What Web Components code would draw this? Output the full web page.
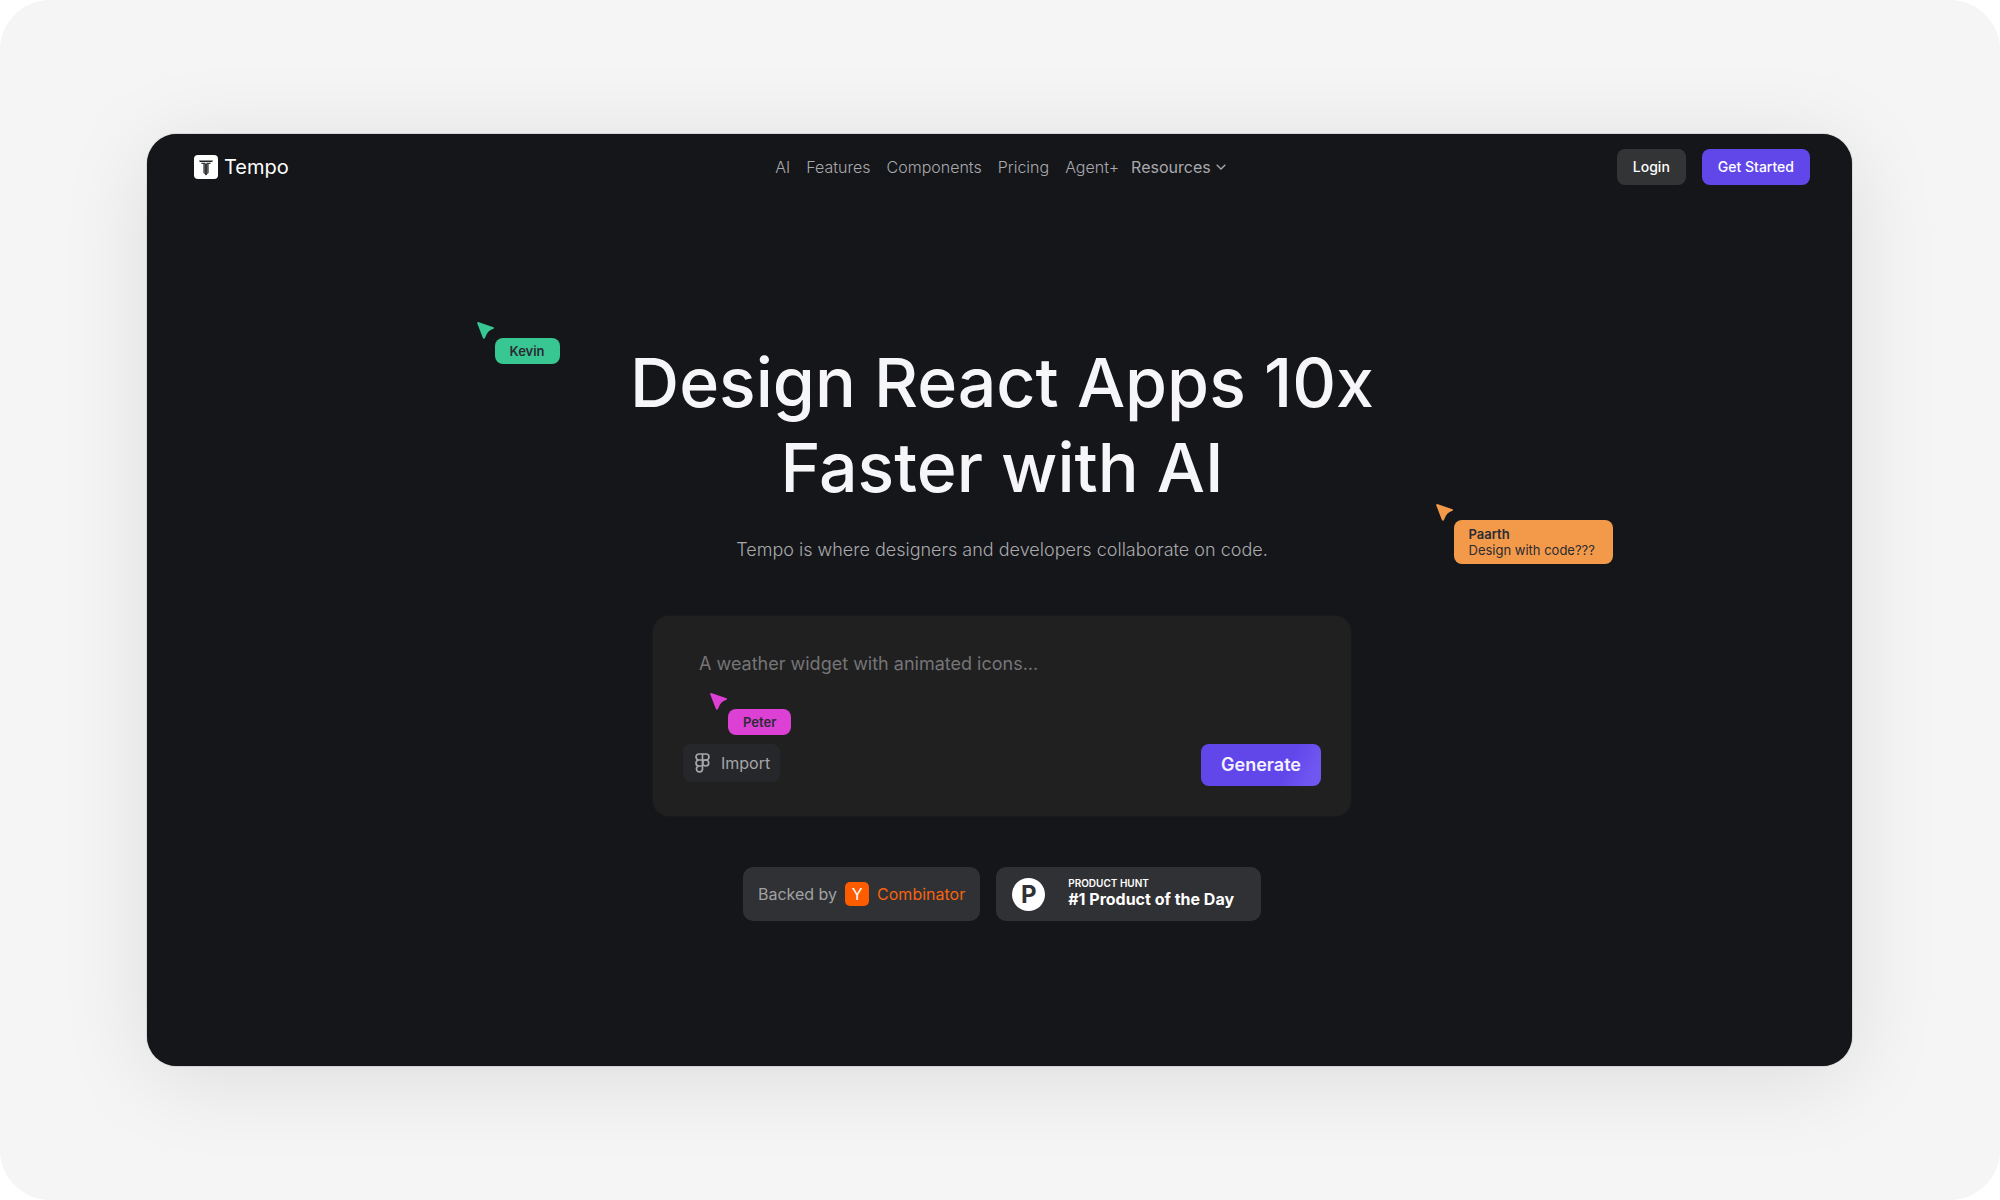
<!DOCTYPE html>
<html lang="en">
<head>
<meta charset="UTF-8">
<meta name="viewport" content="width=device-width, initial-scale=1.0">
<title>Tempo</title>
<style>
    body {
        margin: 0;
        background-color: white;
        font-family: Inter, "Liberation Sans", sans-serif;
    }
</style>
</head>
<body>
<tempo-page></tempo-page>

<script>
class TempoLogo extends HTMLElement{
    _template = `
    <style>
        :host {
            display: block;
        }

        a {
            display: flex;
            width: fit-content;
            align-items: center;
            gap: 6px;
            color: white;
            font-size: 20px;
            line-height: 24px;
            font-weight: 400;
            text-decoration: none;
        }

        svg {
            display: block;
        }
    </style>

    <a href="#">
        <svg width="24" height="24" viewBox="0 0 24 24" aria-hidden="true">
            <rect width="24" height="24" rx="4" fill="#fff"/>
            <path d="M5 5.500h14l-.8 1.500H5.800z" fill="#1f2023"/>
            <path d="M7 7.800h4.600V9H7.800zM12.400 7.800H17L16.200 9h-3.800z" fill="#333438"/>
            <path d="M9.200 9h5.600v8.800L12 20.500l-2.800-2.700z" fill="#5c5d60"/>
            <path d="M12 9v11" stroke="#1c1d20" stroke-width="1.200"/>
        </svg>
        <span>Tempo</span>
    </a>
    `;

    constructor(){
        super();
        this._shadowRoot = this.attachShadow({ mode: 'open'});
        this._shadowRoot.innerHTML = this._template;
    }
}


class TempoButton extends HTMLElement{
    _template = `
    <style>
        :host {
            display: inline-block;
        }

        button {
            display: block;
            border: none;
            border-radius: 8px;
            padding: 8px 16px;
            background-color: #333436;
            color: white;
            font: 500 14px/20px Inter, "Liberation Sans", sans-serif;
            cursor: pointer;
        }

        :host([variant="primary"]) button {
            background-color: #6147ea;
        }

        :host([variant="generate"]) button {
            padding: 9px 20px;
            background: linear-gradient(115deg, #6147ea 70%, #7157f1 92%);
            color: #f4f2ff;
            font-size: 18px;
            line-height: 24px;
            font-weight: 600;
        }

        :host([variant="import"]) button {
            display: flex;
            align-items: center;
            gap: 11px;
            padding: 9px 10px 9px 12px;
            background-color: #25272a;
            color: #a5a6a9;
            font-size: 16px;
            font-weight: 400;
        }
    </style>

    <button type="button"><slot name="icon"></slot><slot></slot></button>
    `;

    constructor(){
        super();
        this._shadowRoot = this.attachShadow({ mode: 'open'});
        this._shadowRoot.innerHTML = this._template;
    }
}


class TempoNav extends HTMLElement{
    _template = `
    <style>
        :host {
            display: grid;
            grid-template-columns: 1fr auto 1fr;
            align-items: center;
            padding: 15px 42px 15px 47px;
        }

        nav {
            display: flex;
            gap: 12px;
            margin-right: 3px;
            font-size: 16px;
            line-height: 20px;
            font-weight: 300;
        }

        .links {
            display: flex;
            gap: 16px;
        }

        nav a {
            color: #a9a9ac;
            text-decoration: none;
        }

        .resources {
            display: flex;
            align-items: center;
            gap: 5px;
            font-weight: 400;
        }

        .actions {
            display: flex;
            gap: 16px;
            justify-self: end;
        }
    </style>

    <tempo-logo></tempo-logo>
    <nav>
        <div class="links">
            <a href="#">AI</a>
            <a href="#">Features</a>
            <a href="#">Components</a>
            <a href="#">Pricing</a>
            <a href="#">Agent+</a>
        </div>
        <a class="resources" href="#">
            Resources
            <svg width="10" height="6" viewBox="0 0 10 6" fill="none" stroke="currentColor" stroke-width="1.300" aria-hidden="true">
                <path d="M.7.700 5 5 9.300.7"/>
            </svg>
        </a>
    </nav>
    <div class="actions">
        <tempo-button>Login</tempo-button>
        <tempo-button variant="primary">Get Started</tempo-button>
    </div>
    `;

    constructor(){
        super();
        this._shadowRoot = this.attachShadow({ mode: 'open'});
        this._shadowRoot.innerHTML = this._template;
    }
}


// collaborator cursor, the colour comes from --cursor-color
class LiveCursor extends HTMLElement{
    _template = `
    <style>
        :host {
            display: block;
            color: #2a2b33;
            font-size: 13px;
            line-height: 16px;
        }

        svg {
            display: block;
            fill: var(--cursor-color);
        }

        .label {
            margin-left: 18px;
            padding: 5px 15px;
            border-radius: 8px;
            background-color: var(--cursor-color);
            white-space: nowrap;
        }

        .name {
            font-weight: 600;
        }

        :host([wide]) .label {
            padding: 6px 18px 6px 15px;
        }
    </style>

    <svg width="18" height="16" viewBox="0 0 18 16" overflow="visible" aria-hidden="true">
        <path d="M1.200 0 16.500 5.200Q17.800 6 16.500 6.700 10.300 8.500 8.200 15.500 7 17.800 5.800 15.800L.2 1.200Q.1 0 1.200 0z"/>
    </svg>
    <div class="label">
        <div class="name"><slot name="name"></slot></div>
        <slot></slot>
    </div>
    `;

    constructor(){
        super();
        this._shadowRoot = this.attachShadow({ mode: 'open'});
        this._shadowRoot.innerHTML = this._template;
    }
}


class PromptCard extends HTMLElement{
    _template = `
    <style>
        :host {
            display: block;
            position: relative;
            box-sizing: border-box;
            width: 100%;
            max-width: 698px;
            padding: 30px;
            border-radius: 16px;
            background-color: #202021;
            box-shadow: 0 0 3px #202021;
        }

        textarea {
            display: block;
            box-sizing: border-box;
            width: 100%;
            height: 98px;
            padding: 6px 16px;
            border: none;
            outline: none;
            resize: none;
            background: transparent;
            color: white;
            font: 400 18px/24px Inter, "Liberation Sans", sans-serif;
        }

        textarea::placeholder {
            color: #757577;
            opacity: 1;
        }

        .footer {
            display: flex;
            justify-content: space-between;
            align-items: flex-start;
        }

        live-cursor {
            position: absolute;
            left: 57px;
            top: 77px;
            --cursor-color: #dd40d4;
        }
    </style>

    <textarea aria-label="Prompt" placeholder="A weather widget with animated icons..."></textarea>
    <div class="footer">
        <tempo-button variant="import">
            <svg slot="icon" width="15" height="20" viewBox="0 0 15 20" fill="none" stroke="currentColor" stroke-width="1.700" aria-hidden="true">
                <path d="M7.500 1H4a3 3 0 0 0 0 6h3.500zM7.500 1H11a3 3 0 0 1 0 6H7.500zM7.500 7H4a3 3 0 0 0 0 6h3.500zM7.500 13H4a3 3 0 1 0 3.500 3z"/>
                <circle cx="10.700" cy="10" r="3"/>
            </svg>
            Import
        </tempo-button>
        <tempo-button variant="generate">Generate</tempo-button>
    </div>
    <live-cursor><span slot="name">Peter</span></live-cursor>
    `;

    constructor(){
        super();
        this._shadowRoot = this.attachShadow({ mode: 'open'});
        this._shadowRoot.innerHTML = this._template;
    }
}


class AwardBadges extends HTMLElement{
    _template = `
    <style>
        :host {
            display: flex;
            flex-wrap: wrap;
            justify-content: center;
            gap: 16px;
        }

        .badge {
            display: flex;
            align-items: center;
            box-sizing: border-box;
            height: 54px;
            border-radius: 10px;
            background-color: #303134;
        }

        .backed {
            gap: 8px;
            padding: 0 15px;
            color: #a0a1a3;
            font-size: 16px;
            line-height: 20px;
        }

        .y {
            width: 24px;
            border-radius: 5px;
            background-color: #ff5c00;
            color: white;
            line-height: 24px;
            text-align: center;
        }

        .combinator {
            color: #f56410;
        }

        .hunt {
            gap: 23px;
            padding: 0 27px 0 16px;
            color: white;
        }

        .p {
            width: 33px;
            border-radius: 50%;
            background-color: white;
            color: #303134;
            font-size: 24px;
            line-height: 33px;
            font-weight: 700;
            text-align: center;
        }

        .small {
            font-size: 10px;
            line-height: 12px;
            font-weight: 600;
        }

        .big {
            padding-bottom: 2px;
            font-size: 16px;
            line-height: 20px;
            font-weight: 700;
        }
    </style>

    <div class="badge backed">
        <span>Backed by</span>
        <span class="y">Y</span>
        <span class="combinator">Combinator</span>
    </div>
    <div class="badge hunt">
        <span class="p">P</span>
        <div>
            <div class="small">PRODUCT HUNT</div>
            <div class="big">#1 Product of the Day</div>
        </div>
    </div>
    `;

    constructor(){
        super();
        this._shadowRoot = this.attachShadow({ mode: 'open'});
        this._shadowRoot.innerHTML = this._template;
    }
}


class TempoHero extends HTMLElement{
    _template = `
    <style>
        :host {
            display: flex;
            flex-direction: column;
            align-items: center;
            position: relative;
            padding: 140px 42px 0 47px;
        }

        h1 {
            max-width: 860px;
            margin: 0;
            color: #f6f6f8;
            font-size: 68px;
            line-height: 85px;
            font-weight: 500;
            text-align: center;
        }

        p {
            margin: 28px 0 54px;
            color: #a9a9ac;
            font-size: 18px;
            line-height: 24px;
            font-weight: 300;
        }

        award-badges {
            margin-top: 51px;
        }

        live-cursor {
            position: absolute;
        }

        .kevin {
            left: calc(50% - 523px);
            top: 122px;
            --cursor-color: #38c793;
        }

        .paarth {
            left: calc(50% + 436px);
            top: 304px;
            --cursor-color: #f39a4a;
        }
    </style>

    <h1>Design React Apps 10x<br>Faster with AI</h1>
    <p>Tempo is where designers and developers collaborate on code.</p>
    <prompt-card></prompt-card>
    <award-badges></award-badges>
    <live-cursor class="kevin"><span slot="name">Kevin</span></live-cursor>
    <live-cursor class="paarth" wide><span slot="name">Paarth</span>Design with code???</live-cursor>
    `;

    constructor(){
        super();
        this._shadowRoot = this.attachShadow({ mode: 'open'});
        this._shadowRoot.innerHTML = this._template;
    }
}


class TempoPage extends HTMLElement{
    _template = `
    <style>
        :host {
            display: flex;
            box-sizing: border-box;
            min-height: 100vh;
            padding: 134px 148px 134px 147px;
            border-radius: 50px;
            background-color: #f5f5f5;
        }

        .window {
            flex: 1;
            box-sizing: border-box;
            padding-bottom: 48px;
            border-radius: 30px;
            background-color: #15161a;
            box-shadow: 0 12px 90px rgba(0, 0, 0, 0.1), 0 0 1px #15161a;
        }
    </style>

    <div class="window">
        <tempo-nav></tempo-nav>
        <main><tempo-hero></tempo-hero></main>
    </div>
    `;

    constructor(){
        super();
        this._shadowRoot = this.attachShadow({ mode: 'open'});
        this._shadowRoot.innerHTML = this._template;
    }
}

window.customElements.define('tempo-logo', TempoLogo);
window.customElements.define('tempo-button', TempoButton);
window.customElements.define('tempo-nav', TempoNav);
window.customElements.define('live-cursor', LiveCursor);
window.customElements.define('prompt-card', PromptCard);
window.customElements.define('award-badges', AwardBadges);
window.customElements.define('tempo-hero', TempoHero);
window.customElements.define('tempo-page', TempoPage);
</script>
</body>
</html>
